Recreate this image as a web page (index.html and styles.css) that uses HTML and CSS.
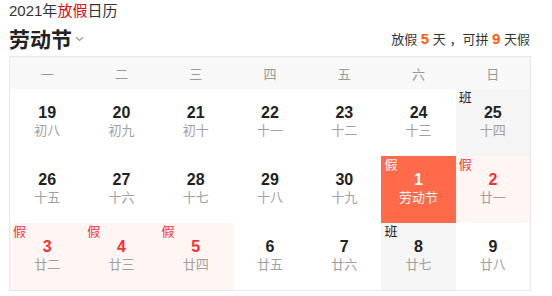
FILE: index.html
```html
<!DOCTYPE html>
<html lang="zh">
<head>
<meta charset="utf-8">
<link rel="stylesheet" href="styles.css">
</head>
<body>
<div class="page">
  <div class="title">2021年<span class="red">放假</span>日历</div>
  <div class="head">
    <div class="festival">劳动节<svg class="chev" width="9" height="6" viewBox="0 0 9 6"><path d="M1 1.2 L4.5 4.5 L8 1.2" fill="none" stroke="#999" stroke-width="1.2"/></svg></div>
    <div class="stats">放假 <b>5</b> 天 ，可拼 <b>9</b> 天假</div>
  </div>
  <div class="cal">
    <div class="wk">一</div><div class="wk">二</div><div class="wk">三</div><div class="wk">四</div><div class="wk">五</div><div class="wk">六</div><div class="wk">日</div>

    <div class="cell"><div class="num">19</div><div class="lunar">初八</div></div>
    <div class="cell"><div class="num">20</div><div class="lunar">初九</div></div>
    <div class="cell"><div class="num">21</div><div class="lunar">初十</div></div>
    <div class="cell"><div class="num">22</div><div class="lunar">十一</div></div>
    <div class="cell"><div class="num">23</div><div class="lunar">十二</div></div>
    <div class="cell"><div class="num">24</div><div class="lunar">十三</div></div>
    <div class="cell work"><span class="tag">班</span><div class="num">25</div><div class="lunar">十四</div></div>

    <div class="cell"><div class="num">26</div><div class="lunar">十五</div></div>
    <div class="cell"><div class="num">27</div><div class="lunar">十六</div></div>
    <div class="cell"><div class="num">28</div><div class="lunar">十七</div></div>
    <div class="cell"><div class="num">29</div><div class="lunar">十八</div></div>
    <div class="cell"><div class="num">30</div><div class="lunar">十九</div></div>
    <div class="cell fest"><span class="tag">假</span><div class="num">1</div><div class="lunar">劳动节</div></div>
    <div class="cell rest"><span class="tag">假</span><div class="num">2</div><div class="lunar">廿一</div></div>

    <div class="cell rest"><span class="tag">假</span><div class="num">3</div><div class="lunar">廿二</div></div>
    <div class="cell rest"><span class="tag">假</span><div class="num">4</div><div class="lunar">廿三</div></div>
    <div class="cell rest"><span class="tag">假</span><div class="num">5</div><div class="lunar">廿四</div></div>
    <div class="cell"><div class="num">6</div><div class="lunar">廿五</div></div>
    <div class="cell"><div class="num">7</div><div class="lunar">廿六</div></div>
    <div class="cell work"><span class="tag">班</span><div class="num">8</div><div class="lunar">廿七</div></div>
    <div class="cell"><div class="num">9</div><div class="lunar">廿八</div></div>
  </div>
</div>
</body>
</html>
```
FILE: styles.css
```css
* { box-sizing: border-box; }
html, body { margin: 0; padding: 0; background: #fff; }
body {
  font-family: "Liberation Sans", Arial, "Noto Sans CJK SC", sans-serif;
  color: #333;
}
.page { padding: 2px 22px 0 9px; width: 552px; }
.title { font-size: 15px; line-height: 17px; color: #333; }
.red { color: #e4080d; }
.head { display: flex; justify-content: space-between; align-items: center; height: 37px; }
.festival { font-size: 21px; font-weight: bold; color: #222; display: flex; align-items: center; }
.chev { margin-left: 3px; margin-top: 3px; }
.stats { font-size: 13px; color: #333; padding-top: 1px; }
.stats b { color: #ff5b14; font-size: 15px; }
.cal {
  display: grid;
  grid-template-columns: repeat(7, 1fr);
  grid-template-rows: 32px 67px 67px 67px;
  border: 1px solid #e8e8e8;
  width: 522px;
}
.wk {
  background: #f8f8f8;
  color: #999;
  font-size: 13px;
  display: flex; align-items: center; justify-content: center;
}
.cell { position: relative; text-align: center; padding-top: 14px; }
.num { font-size: 16px; font-weight: bold; line-height: 20px; color: #222; }
.lunar { font-size: 13px; line-height: 16px; color: #a0a0a0; }
.tag { position: absolute; left: 3px; top: 1px; font-size: 13px; line-height: 15px; }
.work { background: #f5f5f5; }
.work .tag { color: #222; }
.rest { background: #fff5f3; }
.rest .tag, .rest .num { color: #f73131; }
.fest { background: #ff6a4b; }
.fest .tag, .fest .num, .fest .lunar { color: #fff; }
```
